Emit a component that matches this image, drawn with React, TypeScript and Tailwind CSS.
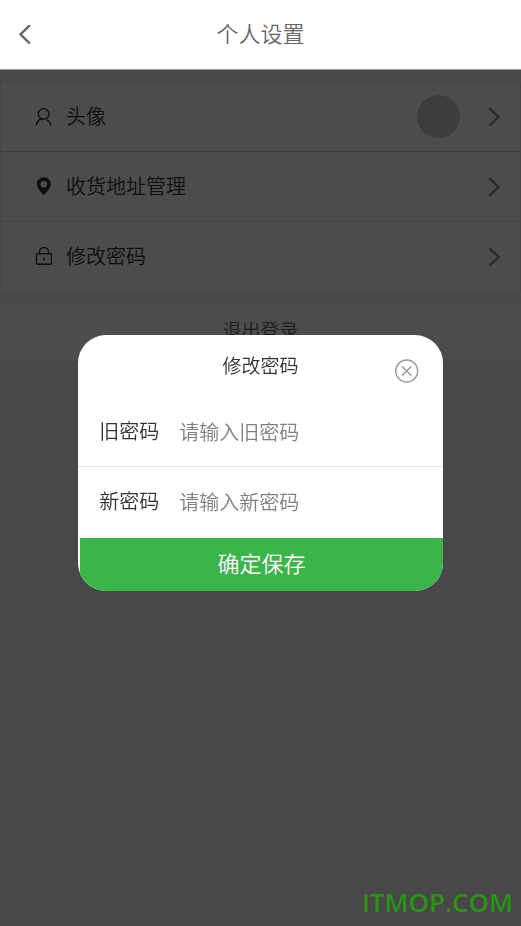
import type { ReactNode } from "react";

function BackIcon() {
  return (
    <svg viewBox="0 0 12 20" className="h-5 w-3" fill="none" stroke="#666666" strokeWidth="2.3" strokeLinecap="round" strokeLinejoin="round" aria-hidden="true">
      <path d="M10.2 .8 1.400 9.300l8.800 8.500" />
    </svg>
  );
}

function ChevronIcon() {
  return (
    <svg viewBox="0 0 12 20" className="h-5 w-3" fill="none" stroke="#838e96" strokeWidth="2.3" strokeLinecap="round" strokeLinejoin="round" aria-hidden="true">
      <path d="M2 1.800 10.700 10 2 18" />
    </svg>
  );
}

function UserIcon() {
  return (
    <svg viewBox="0 0 18 20" className="h-5 w-[18px]" fill="none" stroke="#333333" strokeWidth="1.4" strokeLinecap="round" aria-hidden="true">
      <circle cx="9.600" cy="6.900" r="5.300" />
      <path d="M2.300 18c.5-3.200 2.200-5.200 4.900-6" />
      <path d="M13 12.800c2 1.100 3.300 2.600 3.900 4.900" />
    </svg>
  );
}

function PinIcon() {
  return (
    <svg viewBox="0 0 18 20" className="h-5 w-[18px]" fill="#333333" fillRule="evenodd" aria-hidden="true">
      <path d="M9.800.2c-4 0-7 3-7 6.900 0 3.300 2.700 6.500 7 11.200 4.300-4.700 7-7.900 7-11.200 0-3.900-3-6.900-7-6.900Zm0 3.700a3.300 3.300 0 1 1 0 6.600 3.300 3.300 0 0 1 0-6.600Z" />
    </svg>
  );
}

function LockIcon() {
  return (
    <svg viewBox="0 0 18 20" className="h-5 w-[18px]" fill="none" stroke="#333333" strokeWidth="1.4" strokeLinecap="round" aria-hidden="true">
      <rect x="2.500" y="6.800" width="15" height="10.500" rx="1.500" />
      <path d="M5.500 6.500V5a4.500 4.500 0 0 1 9 0v1.500" />
      <path d="M10 11.200v1.700" />
    </svg>
  );
}

function CloseIcon() {
  return (
    <svg viewBox="0 0 24 24" className="h-6 w-6" fill="none" stroke="#999999" strokeWidth="1.4" strokeLinecap="round" aria-hidden="true">
      <circle cx="11.700" cy="12" r="11" />
      <path d="m7.500 7.800 8.400 8.400M15.900 7.800l-8.400 8.400" />
    </svg>
  );
}

function SettingRow({ icon, label, children }: { icon: ReactNode; label: string; children?: ReactNode }) {
  return (
    <li>
      <button type="button" className="flex h-[69px] w-full items-center pr-5 pl-[33px] text-left text-xl text-[#333333]">
        {icon}
        <span className="ml-3.5 flex-1 pb-0.5">{label}</span>
        {children}
        <span className="ml-7">
          <ChevronIcon />
        </span>
      </button>
    </li>
  );
}

function PasswordField({ id, label, placeholder }: { id: string; label: string; placeholder: string }) {
  return (
    <div className="flex h-[70px] items-center px-[21px]">
      <label htmlFor={id} className="w-20 shrink-0 pb-0.5 text-xl text-[#333333]">
        {label}
      </label>
      <input
        id={id}
        type="password"
        placeholder={placeholder}
        className="min-w-0 flex-1 bg-transparent text-xl outline-none placeholder:text-[#808080]"
      />
    </div>
  );
}

export default function App() {
  return (
    <div className="flex min-h-screen flex-col bg-[#f0f0f0] font-['Noto_Sans_CJK_SC',sans-serif] font-[350]">
      <header className="relative z-20 grid h-[70px] grid-cols-[48px_1fr_48px] items-center border-b border-[#999999] bg-white">
        <button type="button" aria-label="返回" className="flex h-12 items-center pl-[19px]">
          <BackIcon />
        </button>
        <h1 className="pb-1.5 text-center text-[22px] leading-8 font-[350] text-[#666666]">个人设置</h1>
      </header>

      <main className="pt-3">
        <ul className="border-x border-[#e8e8e8] bg-white">
          <SettingRow icon={<UserIcon />} label="头像">
            <span className="h-[43px] w-[43px] rounded-full bg-[#cccccc]" />
          </SettingRow>
          <li role="separator" className="h-px bg-[#cccccc]" />
          <SettingRow icon={<PinIcon />} label="收货地址管理" />
          <li role="separator" className="h-px bg-[#e8e8e8]" />
          <SettingRow icon={<LockIcon />} label="修改密码" />
        </ul>
        <button type="button" className="mt-[13px] h-14 w-full bg-white pb-1 text-[19px] text-[#666666]">
          退出登录
        </button>
      </main>

      <div className="fixed inset-0 z-10 flex items-center justify-center bg-black/70">
        <form
          role="dialog"
          aria-label="修改密码"
          className="w-[70%] overflow-hidden rounded-[28px] bg-white"
          onSubmit={(event) => event.preventDefault()}
        >
          <div className="grid h-[62px] grid-cols-[48px_1fr_48px] items-start">
            <h2 className="col-start-2 pt-4 text-center text-[19px] leading-7 font-[350] text-[#333333]">修改密码</h2>
            <button type="button" aria-label="关闭" className="pt-6">
              <CloseIcon />
            </button>
          </div>
          <div className="divide-y divide-[#e5e5e5] pb-px">
            <PasswordField id="old-password" label="旧密码" placeholder="请输入旧密码" />
            <PasswordField id="new-password" label="新密码" placeholder="请输入新密码" />
          </div>
          <div className="pl-0.5">
            <button type="submit" className="h-[53px] w-full bg-[#3bb54a] pb-1 text-[22px] text-white">
              确定保存
            </button>
          </div>
        </form>
      </div>

      <p className="fixed right-2 bottom-1.5 z-20 font-['Open_Sans',sans-serif] text-[26px] leading-9 font-semibold text-[#289614]">
        ITMOP.COM
      </p>
    </div>
  );
}
